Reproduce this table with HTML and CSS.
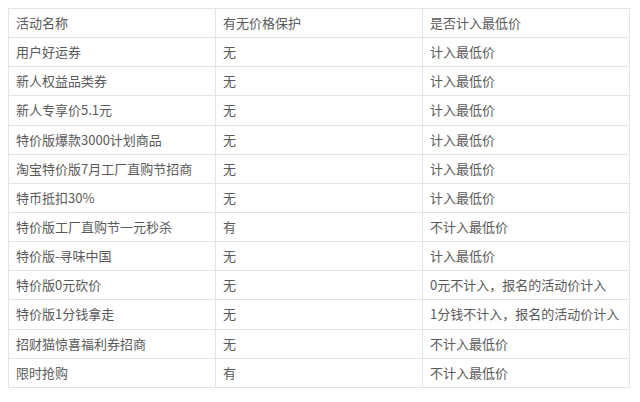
FILE: index.html
```html
<!DOCTYPE html>
<html lang="zh">
<head>
<meta charset="utf-8">
<link rel="stylesheet" href="styles.css">
</head>
<body>
<table class="grid">
<tr><td>活动名称</td><td>有无价格保护</td><td>是否计入最低价</td></tr>
<tr><td>用户好运券</td><td>无</td><td>计入最低价</td></tr>
<tr><td>新人权益品类券</td><td>无</td><td>计入最低价</td></tr>
<tr><td>新人专享价5.1元</td><td>无</td><td>计入最低价</td></tr>
<tr><td>特价版爆款3000计划商品</td><td>无</td><td>计入最低价</td></tr>
<tr><td>淘宝特价版7月工厂直购节招商</td><td>无</td><td>计入最低价</td></tr>
<tr><td>特币抵扣30%</td><td>无</td><td>计入最低价</td></tr>
<tr><td>特价版工厂直购节一元秒杀</td><td>有</td><td>不计入最低价</td></tr>
<tr><td>特价版-寻味中国</td><td>无</td><td>计入最低价</td></tr>
<tr><td>特价版0元砍价</td><td>无</td><td>0元不计入，报名的活动价计入</td></tr>
<tr><td>特价版1分钱拿走</td><td>无</td><td>1分钱不计入，报名的活动价计入</td></tr>
<tr><td>招财猫惊喜福利券招商</td><td>无</td><td>不计入最低价</td></tr>
<tr><td>限时抢购</td><td>有</td><td>不计入最低价</td></tr>
</table>
</body>
</html>
```
FILE: styles.css
```css
html, body {
  margin: 0;
  padding: 0;
  background: #ffffff;
}
body {
  padding: 8px;
  font-family: "Noto Sans CJK SC", "Noto Sans", sans-serif;
  font-size: 13px;
  color: #5a5a5a;
}
.grid {
  border-collapse: collapse;
  width: 622px;
  table-layout: fixed;
}
.grid td {
  border: 1px solid #e4e4e4;
  height: 28.15px;
  padding: 0 0 0 7px;
  vertical-align: middle;
  white-space: nowrap;
  line-height: 16px;
}
```
